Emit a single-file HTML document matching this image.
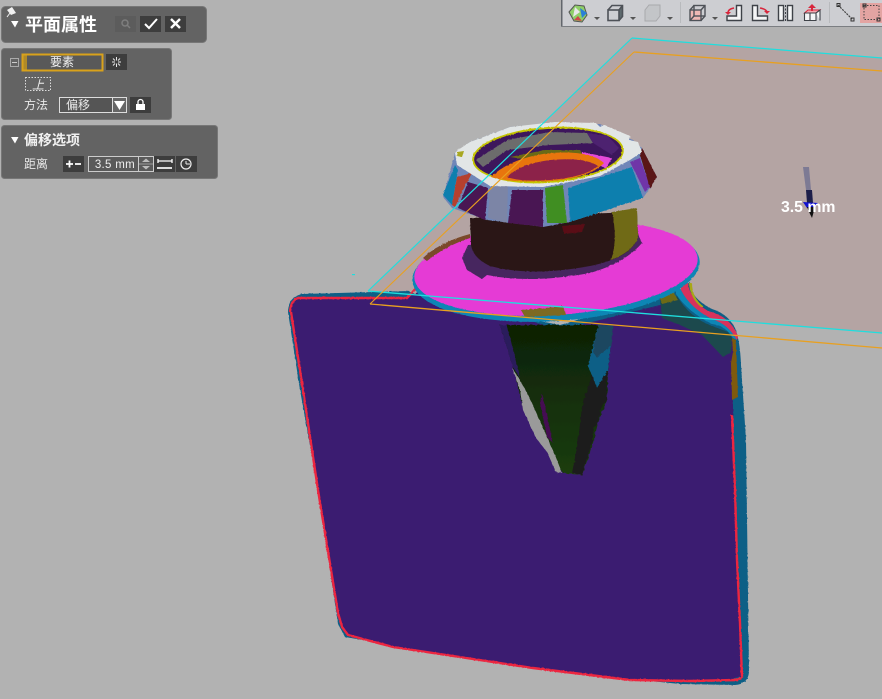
<!DOCTYPE html>
<html><head><meta charset="utf-8"><style>
html,body{margin:0;padding:0;background:#b2b2b2;width:882px;height:699px;overflow:hidden}
svg{position:absolute;left:0;top:0;display:block}
text{font-family:"Liberation Sans","Noto Sans CJK SC",sans-serif}
</style></head><body>
<svg width="882" height="699" viewBox="0 0 882 699" xmlns="http://www.w3.org/2000/svg">
<defs>
<filter id="j" x="-5%" y="-5%" width="110%" height="110%"><feTurbulence type="fractalNoise" baseFrequency="0.3" numOctaves="2" seed="4"/><feDisplacementMap in="SourceGraphic" scale="3"/></filter>
<filter id="k" x="-5%" y="-5%" width="110%" height="110%"><feTurbulence type="fractalNoise" baseFrequency="0.4" numOctaves="2" seed="9"/><feDisplacementMap in="SourceGraphic" scale="1.6"/></filter>
<linearGradient id="cg" x1="0" y1="0" x2="0" y2="1"><stop offset="0" stop-color="#0d2105"/><stop offset="1" stop-color="#1b3d10"/></linearGradient>
</defs>
<rect width="882" height="699" fill="#b2b2b2"/>
<!-- plane -->
<polygon points="632,38 882,58 882,333 368,291" fill="#b4a4a3"/>
<line x1="632" y1="38" x2="882" y2="58" stroke="#1fdede" stroke-width="1.3"/>
<line x1="634" y1="52" x2="882" y2="71" stroke="#e8a020" stroke-width="1.3"/>

<!-- body outer blue -->
<g filter="url(#k)">
<path d="M288,312 Q288,297 302,294 L408,291 L430,300 L560,325 L680,290 L690,282 Q690,298 712,309 Q728,314 735,328 Q740,340 741,365 L746,440 L749,672 Q748,684 735,685 L680,684 L600,676 L450,655 L345,637 L338,624 L318,490 L300,390 Z" fill="#0b5e86"/>
<path d="M291,312 Q291,300 302,298 L407,298 L425,288 L560,330 L672,302 L700,330 L733,340 L733,410 L738,590 L741,676 L730,680 L630,680 L533,668 L393,647 L348,635 L342,627 L338,613 L318,490 L303,390 Z" fill="#3b1c71"/>
<path d="M290,312 Q291,300 298,298 L345,298 L385,298 L407,298 L420,284" fill="none" stroke="#ec2540" stroke-width="2.4"/>
<path d="M291,312 L303,390 L318,490 L338,613 L342,627 L348,635 L393,647 L533,668 L630,680 L690,681 L737,680 L742,677 L740,623 L737,560 L735,490 L732,415" fill="none" stroke="#ec2540" stroke-width="2.4"/>
<!-- right shoulder -->
<path d="M660,298 L677,296 Q690,318 712,326 L728,332 L732,338 L731,352 L723,357 L702,335 L680,325 L662,318 Z" fill="#1b4a4e"/>
<path d="M660,298 L672,290 L678,300 L662,304 Z" fill="#6e6a18"/>
<path d="M676,288 L680,288 Q692,312 718,320 Q732,326 737,340 L733,338 Q726,326 712,324 Q688,312 676,294 Z" fill="#0f86b5"/>
<path d="M681,283 L688,283 Q690,300 708,311 Q730,316 738,336 L737,340 Q728,324 712,319 Q690,308 681,290 Z" fill="#d8305c"/>
<path d="M689,283 L692,283 Q692,298 704,307 L701,307 Q690,298 689,283 Z" fill="#a8a816"/>
<path d="M732,338 L736,340 L738,397 L732,400 L731,363 L733,352 Z" fill="#7e5a10"/>
</g>

<!-- cone -->
<g filter="url(#j)">
<path d="M500,325 L613,325 L608,370 L607,400 L598,423 L592,447 L582,475 L572,474 L563,473 L538,437 L523,408 L513,367 Z" fill="url(#cg)"/>
<path d="M500,325 L507,325 L520,378 L513,367 Z" fill="#2c1a5c"/>
<path d="M512,368 L520,380 L527,393 L536,412 L547,437 L555,455 L562,473 L556,472 L547,452 L536,438 L523,410 L520,390 Z" fill="#9a9a9a"/>
<path d="M542,393 L553,443 L547,437 L540,403 Z" fill="#450a52"/>
<path d="M598,325 L613,325 L608,370 L597,388 L592,375 L588,367 Z" fill="#0d5f86"/>
<path d="M598,325 L613,325 L611,345 L597,358 L593,352 Z" fill="#1b4660"/>
<path d="M592,375 L597,388 L608,370 L606,384 L607,400 L601,408 L598,423 L594,428 L592,443 L587,458 L582,475 L572,473 L577,447 L580,425 L582,407 Z" fill="#1c1c1c"/>
</g>

<!-- disk -->
<g filter="url(#k)">
<ellipse cx="556" cy="271" rx="144" ry="50" transform="rotate(-4 556 271)" fill="#0f86b5"/>
<ellipse cx="556" cy="268" rx="142" ry="47" transform="rotate(-4 556 268)" fill="#e53bd5"/>
<path d="M423,258 Q440,242 470,234 L470,238 Q445,246 427,261 Z" fill="#7a4a2a"/>
<path d="M521,310 L545,308 L563,306 L566,315 L525,317 Z" fill="#7d6a22"/>
<path d="M468,245 L462,258 L467,270 L482,279 L487,275 Q530,284 590,273 Q625,263 642,243 L637,232 Z" fill="#46285e"/>
<!-- neck -->
<path d="M470,218 L637,212 L638,238 Q630,258 590,266 Q530,277 490,266 Q473,258 471,245 Z" fill="#2a1718"/>
<path d="M612,212 L637,208 L638,238 Q632,252 611,260 Q618,240 612,212 Z" fill="#6f6a16"/>
<path d="M562,226 L585,224 L582,232 L564,234 Z" fill="#5a0f12"/>
</g>

<!-- ring -->
<g filter="url(#k)">
<path d="M443,197 L455,153 L470,142 L510,127 L555,123 L600,124 L633,140 L642,148 L657,177 L650,188 L643,198 L570,222 L543,227 L487,220 L452,208 Z" fill="#6f86b8"/>
<path d="M443,195 L455,165 L458,170 L452,205 Z" fill="#0f7fae"/>
<path d="M452,205 L457,177 L472,173 L463,190 L455,207 Z" fill="#b5402e"/>
<path d="M458,208 L468,182 L488,188 L485,220 Z" fill="#4a1552"/>
<path d="M488,218 L490,187 L508,185 L507,223 Z" fill="#7c85a6"/>
<path d="M508,223 L512,190 L543,190 L543,227 Z" fill="#4a1352"/>
<path d="M547,223 L545,188 L563,185 L567,223 Z" fill="#3f8e22"/>
<path d="M570,222 L568,188 L632,167 L643,198 Z" fill="#0f7fae"/>
<path d="M630,162 L640,158 L650,187 L645,192 Z" fill="#6f35a8"/>
<path d="M642,148 L657,177 L650,188 L640,155 Z" fill="#5a1414"/>
<!-- top -->
<path d="M455,153 L458,150 L470,142 L510,127 L555,122 L596,123 L600,127 L604,125 L630,136 L629,140 L638,142 L642,152 L630,160 L600,176 L543,187 L490,186 L457,165 Z" fill="#e2e6e6"/>
<path d="M457,152 L464,151 L462,157 L457,156 Z" fill="#a8a820"/>
<ellipse cx="548" cy="155" rx="76" ry="28" transform="rotate(-4 548 155)" fill="#c4c400"/>
<ellipse cx="548" cy="155" rx="74" ry="26" transform="rotate(-4 548 155)" fill="#3d155c"/>
<path d="M476,160 L507,140 L550,132 L587,133 L593,143 L550,145 L507,150 L483,167 Z" fill="#6c6c6c"/>
<path d="M587,133 L608,136 L619,148 L612,155 L593,143 Z" fill="#4d2070"/>
<path d="M510,157 L545,150 L580,150 L583,155 L530,160 Z" fill="#6a6a18"/>
<path d="M582,152 L612,158 L606,168 L582,160 Z" fill="#e54ad8"/>
<path d="M491,177 Q510,158 550,153 Q590,150 604,163 Q590,178 550,181 Q510,183 491,177 Z" fill="#e8740c"/>
<path d="M507,177 Q520,164 550,160 Q585,157 598,166 Q585,177 550,180 Q520,182 507,177 Z" fill="#8c2048"/>
</g>

<!-- lines over -->
<line x1="632" y1="38" x2="368" y2="291" stroke="#1fdede" stroke-width="1.2"/>
<line x1="368" y1="291" x2="882" y2="333" stroke="#1fdede" stroke-width="1.3"/>
<line x1="634" y1="52" x2="370" y2="304" stroke="#e8a020" stroke-width="1.1"/>
<line x1="370" y1="304" x2="882" y2="348" stroke="#e8a020" stroke-width="1.3"/>
<rect x="352" y="274" width="3" height="1.2" fill="#1fdede"/>

<!-- arrow + label -->
<polygon points="803,167 809,167 811,190 806,190" fill="#7d7a94"/>
<polygon points="806,190 812,190 813,203 807,203" fill="#1d1f4a"/>
<polygon points="803,202 818,203 814,208 807,208" fill="#1010d0"/>
<polygon points="807,207 815,207 812,218 810,214" fill="#111"/>
<text x="781" y="212" font-size="15.8" font-weight="700" fill="#fff">3.5 mm</text>

<!-- toolbar -->
<rect x="561" y="0" width="321" height="27" fill="#cdced2"/>
<rect x="561" y="0" width="1.5" height="27" fill="#62666c"/>
<rect x="561" y="26" width="321" height="1" fill="#7b7e82"/>
<rect x="680" y="2" width="1" height="21" fill="#b8babd"/>
<rect x="829" y="2" width="1" height="21" fill="#b8babd"/>
<polygon points="569,12 575,5 584,6 587,15 582,22 574,21" fill="#8fcf68" stroke="#555" stroke-width="1"/>
<polygon points="580,8 587,13 582,18" fill="#2a80d8"/><polygon points="575,7 580,12 573,17" fill="#e8e8e8"/><polygon points="578,16 582,21 574,20" fill="#d04848"/>
<g fill="#555"><polygon points="594,17 600,17 597,20"/><polygon points="630,17 636,17 633,20"/><polygon points="667,17 673,17 670,20"/><polygon points="712,17 718,17 715,20"/></g>
<polygon points="619,10 623,6 622,17 619,20" fill="#5e6a6e"/>
<g fill="none" stroke="#4e5258" stroke-width="1.6"><rect x="608" y="10" width="11" height="10.5"/><path d="M608,10 L612,5.5 H622.5 V16.5 L619,20.5 M619,10 L622.5,5.5"/></g>
<path d="M645,10 L649,5 H660 V16 L656,21 H645 Z" fill="#c3c5c8" stroke="#a8a9ac"/>
<rect x="690" y="10" width="11" height="10.5" fill="#f0b8b4"/>
<g fill="none" stroke="#4e5258" stroke-width="1.4"><rect x="690" y="10" width="11" height="10.5"/><rect x="694" y="5.5" width="11" height="10.5"/><path d="M690,10 L694,5.5 M701,10 L705,5.5 M690,20.5 L694,16 M701,20.5 L705,16"/></g>
<g fill="#f4f5f6" stroke="#3e4248" stroke-width="1.4"><path d="M727,16 H736.5 V5.5 H741.5 V20.5 H727 Z"/><path d="M752.5,5.5 H757.5 V16 H767.5 V20.5 H752.5 Z"/><rect x="778.5" y="5.5" width="5" height="15"/><rect x="787.5" y="5.5" width="5" height="15"/></g>
<path d="M734,8 Q728,9 728,13" fill="none" stroke="#d8263c" stroke-width="1.6"/><polygon points="725,12 731,12 728,15" fill="#d8263c"/>
<path d="M760,8 Q766,9 767,12" fill="none" stroke="#d8263c" stroke-width="1.6"/><polygon points="764,11 770,11 767,14" fill="#d8263c"/>
<line x1="785.5" y1="5" x2="785.5" y2="21" stroke="#3e4248" stroke-dasharray="2 1.5"/>
<path d="M804.5,13 L808,10 H820 L816,13 Z" fill="#f4a8b0" stroke="#d8263c"/>
<path d="M804.5,13 H816 V20.5 H804.5 Z M810,13 V20.5 M816,13 L820,10 V20.5" fill="#f4f5f6" stroke="#3e4248" stroke-width="1.1"/>
<path d="M812,11 V7" stroke="#d8263c" stroke-width="2"/><polygon points="808,8 816,8 812,4" fill="#d8263c"/>
<line x1="838" y1="5" x2="852" y2="19" stroke="#444" stroke-width="1.2" stroke-dasharray="2 1"/><rect x="837" y="3.5" width="3" height="3" fill="none" stroke="#333"/><rect x="851" y="18" width="3" height="3" fill="none" stroke="#333"/>
<rect x="860" y="3" width="22" height="20" fill="#e3a4a2"/>
<rect x="864" y="5.5" width="15" height="14" fill="none" stroke="#444" stroke-dasharray="1.5 1.5"/><rect x="863" y="4" width="3" height="3" fill="none" stroke="#333"/><rect x="877" y="18" width="3" height="3" fill="none" stroke="#333"/>

<!-- panel 1 -->
<rect x="1.5" y="6.5" width="205" height="36" rx="4" fill="#636363" stroke="#777"/>
<path d="M7,10 L12,7 L16,13 L11,15 Z" fill="#f0f0f0"/><line x1="7" y1="17" x2="10" y2="13" stroke="#f0f0f0"/>
<polygon points="11,21 18.5,21 15,27.5" fill="#fff"/>
<text x="25" y="31" font-size="18" font-weight="700" fill="#fff">平面属性</text>
<rect x="115" y="16" width="21" height="16" fill="#5c5c5c"/><circle cx="125" cy="23" r="3" fill="none" stroke="#7e7e7e" stroke-width="1.5"/><line x1="127" y1="25" x2="130" y2="28" stroke="#7e7e7e" stroke-width="1.5"/>
<rect x="140" y="16" width="21" height="16" fill="#3d3d3d"/><path d="M145,24 L149,28 L157,19" fill="none" stroke="#fff" stroke-width="2"/>
<rect x="165" y="16" width="21" height="16" fill="#3d3d3d"/><path d="M171,19 L180,28 M180,19 L171,28" stroke="#fff" stroke-width="2.4"/>

<!-- panel 2 -->
<rect x="1.5" y="48.5" width="170" height="71" rx="3" fill="#636363" stroke="#777"/>
<rect x="10.5" y="58.5" width="8" height="8" fill="none" stroke="#aaa"/><line x1="12" y1="62.5" x2="17" y2="62.5" stroke="#ccc"/>
<rect x="22.5" y="54.5" width="80" height="16" fill="#595959" stroke="#d9a21b" stroke-width="2"/>
<rect x="23.5" y="55.5" width="3.5" height="14" fill="#b08a28"/>
<text x="62" y="66" text-anchor="middle" font-size="12" fill="#f2f2f2">要素</text>
<rect x="106" y="54" width="21" height="16" fill="#3d3d3d"/><path d="M116.5,57 V60.5 M116.5,63.5 V67 M112,62 H115 M118,62 H121 M113,58.5 L115,60.5 M118,63.5 L120,65.5 M120,58.5 L118,60.5 M115,63.5 L113,65.5" stroke="#e8e8e8" stroke-width="1"/>
<rect x="25.5" y="77.5" width="25" height="13" fill="none" stroke="#ddd" stroke-dasharray="1.5 1.5"/>
<text x="38" y="89" text-anchor="middle" font-size="12" font-style="italic" fill="#eee">上</text>
<text x="24" y="109" font-size="12" fill="#e8e8e8">方法</text>
<rect x="59.5" y="97.5" width="67" height="15" fill="#555" stroke="#ddd"/>
<text x="66" y="109" font-size="12" fill="#e8e8e8">偏移</text>
<rect x="112.5" y="97.5" width="14" height="15" fill="#666" stroke="#ddd"/><polygon points="114,101 125,101 119.5,110" fill="#fff"/>
<rect x="130" y="97" width="21" height="16" fill="#3d3d3d"/><rect x="136" y="104" width="9" height="6" fill="#fff"/><path d="M138,104 V102 a2.5,2.5 0 0 1 5,0 V104" fill="none" stroke="#fff" stroke-width="1.3"/>

<!-- panel 3 -->
<rect x="1.5" y="125.5" width="216" height="53" rx="3" fill="#636363" stroke="#777"/>
<polygon points="11,137 18.5,137 15,143.5" fill="#fff"/>
<text x="24" y="145" font-size="14" font-weight="700" fill="#f0f0f0">偏移选项</text>
<text x="24" y="168" font-size="12" fill="#e8e8e8">距离</text>
<rect x="63" y="156" width="21" height="16" fill="#3d3d3d"/><path d="M66,164 H73 M69.5,160.5 V167.5 M75,164 H81" stroke="#fff" stroke-width="1.8"/>
<rect x="88.5" y="156.5" width="65" height="15" fill="#5a5a5a" stroke="#ccc"/><line x1="138.5" y1="157" x2="138.5" y2="171" stroke="#ccc"/>
<text x="135" y="168" text-anchor="end" font-size="11.5" fill="#eee" letter-spacing=".3">3.5 mm</text>
<polygon points="142,162 150,162 146,158.5" fill="#bbb"/><polygon points="142,166 150,166 146,169.5" fill="#bbb"/>
<line x1="139" y1="164" x2="153" y2="164" stroke="#999"/>
<rect x="154" y="156" width="21" height="16" fill="#3d3d3d"/><path d="M158,161 H172 M158,159 V163 M172,159 V163" stroke="#fff" stroke-width="1.3"/><path d="M157,167 H172 V169 H157 Z" fill="#ddd"/>
<rect x="176" y="156" width="21" height="16" fill="#3d3d3d"/><circle cx="186" cy="164" r="5" fill="none" stroke="#eee" stroke-width="1.2"/><path d="M186,164 H190 M186,161 V164" stroke="#eee"/>
</svg>
</body></html>
